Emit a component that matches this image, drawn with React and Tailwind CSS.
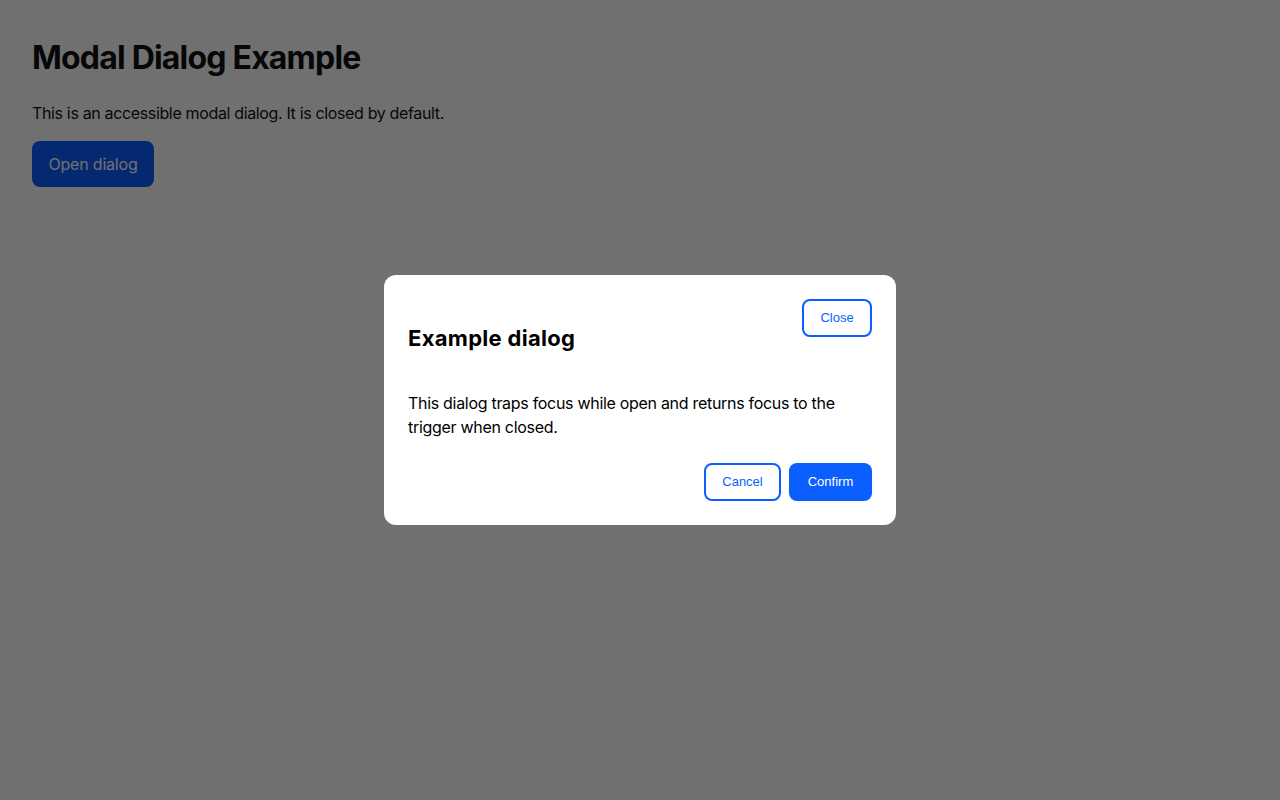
import React from 'react';

const App = () => {
  return (
    <div className="relative min-h-screen bg-white p-8 text-[#111] font-['Inter',sans-serif]">
      {/* Page content */}
      <h1 className="mt-[2px] text-[32px] font-bold leading-[48px] tracking-[-0.8px]">Modal Dialog Example</h1>
      <p className="mt-[19px] text-base leading-6 tracking-[-0.35px]">This is an accessible modal dialog. It is closed by default.</p>
      <button className="mt-4 h-[46px] w-[122px] rounded-lg bg-[#0b5fff] text-base text-white tracking-[-0.2px]">Open dialog</button>

      {/* Overlay */}
      <div className="fixed inset-0 bg-black/[0.56] flex items-center justify-center">
        <div
          role="dialog"
          aria-modal="true"
          className="w-[512px] rounded-xl bg-white p-6 text-black"
        >
          <div className="flex items-start justify-between">
            <h2 className="mt-[25px] text-[22px] font-bold leading-[28px] tracking-[0.3px]">Example dialog</h2>
            <button className="h-[38px] w-[70px] rounded-lg border-2 border-[#0b5fff] bg-white text-[13px] text-[#0b5fff] font-['Liberation_Sans',Arial,sans-serif]">
              Close
            </button>
          </div>
          <p className="mt-[39px] text-base leading-6 tracking-[-0.3px]">
            This dialog traps focus while open and returns focus to the trigger when closed.
          </p>
          <div className="mt-6 flex justify-end gap-2">
            <button className="h-[38px] w-[77px] rounded-lg border-2 border-[#0b5fff] bg-white text-[13px] text-[#0b5fff] font-['Liberation_Sans',Arial,sans-serif]">
              Cancel
            </button>
            <button className="h-[38px] w-[83px] rounded-lg bg-[#0b5fff] text-[13px] font-medium text-white font-['Liberation_Sans',Arial,sans-serif]">
              Confirm
            </button>
          </div>
        </div>
      </div>
    </div>
  );
};

export default App;
